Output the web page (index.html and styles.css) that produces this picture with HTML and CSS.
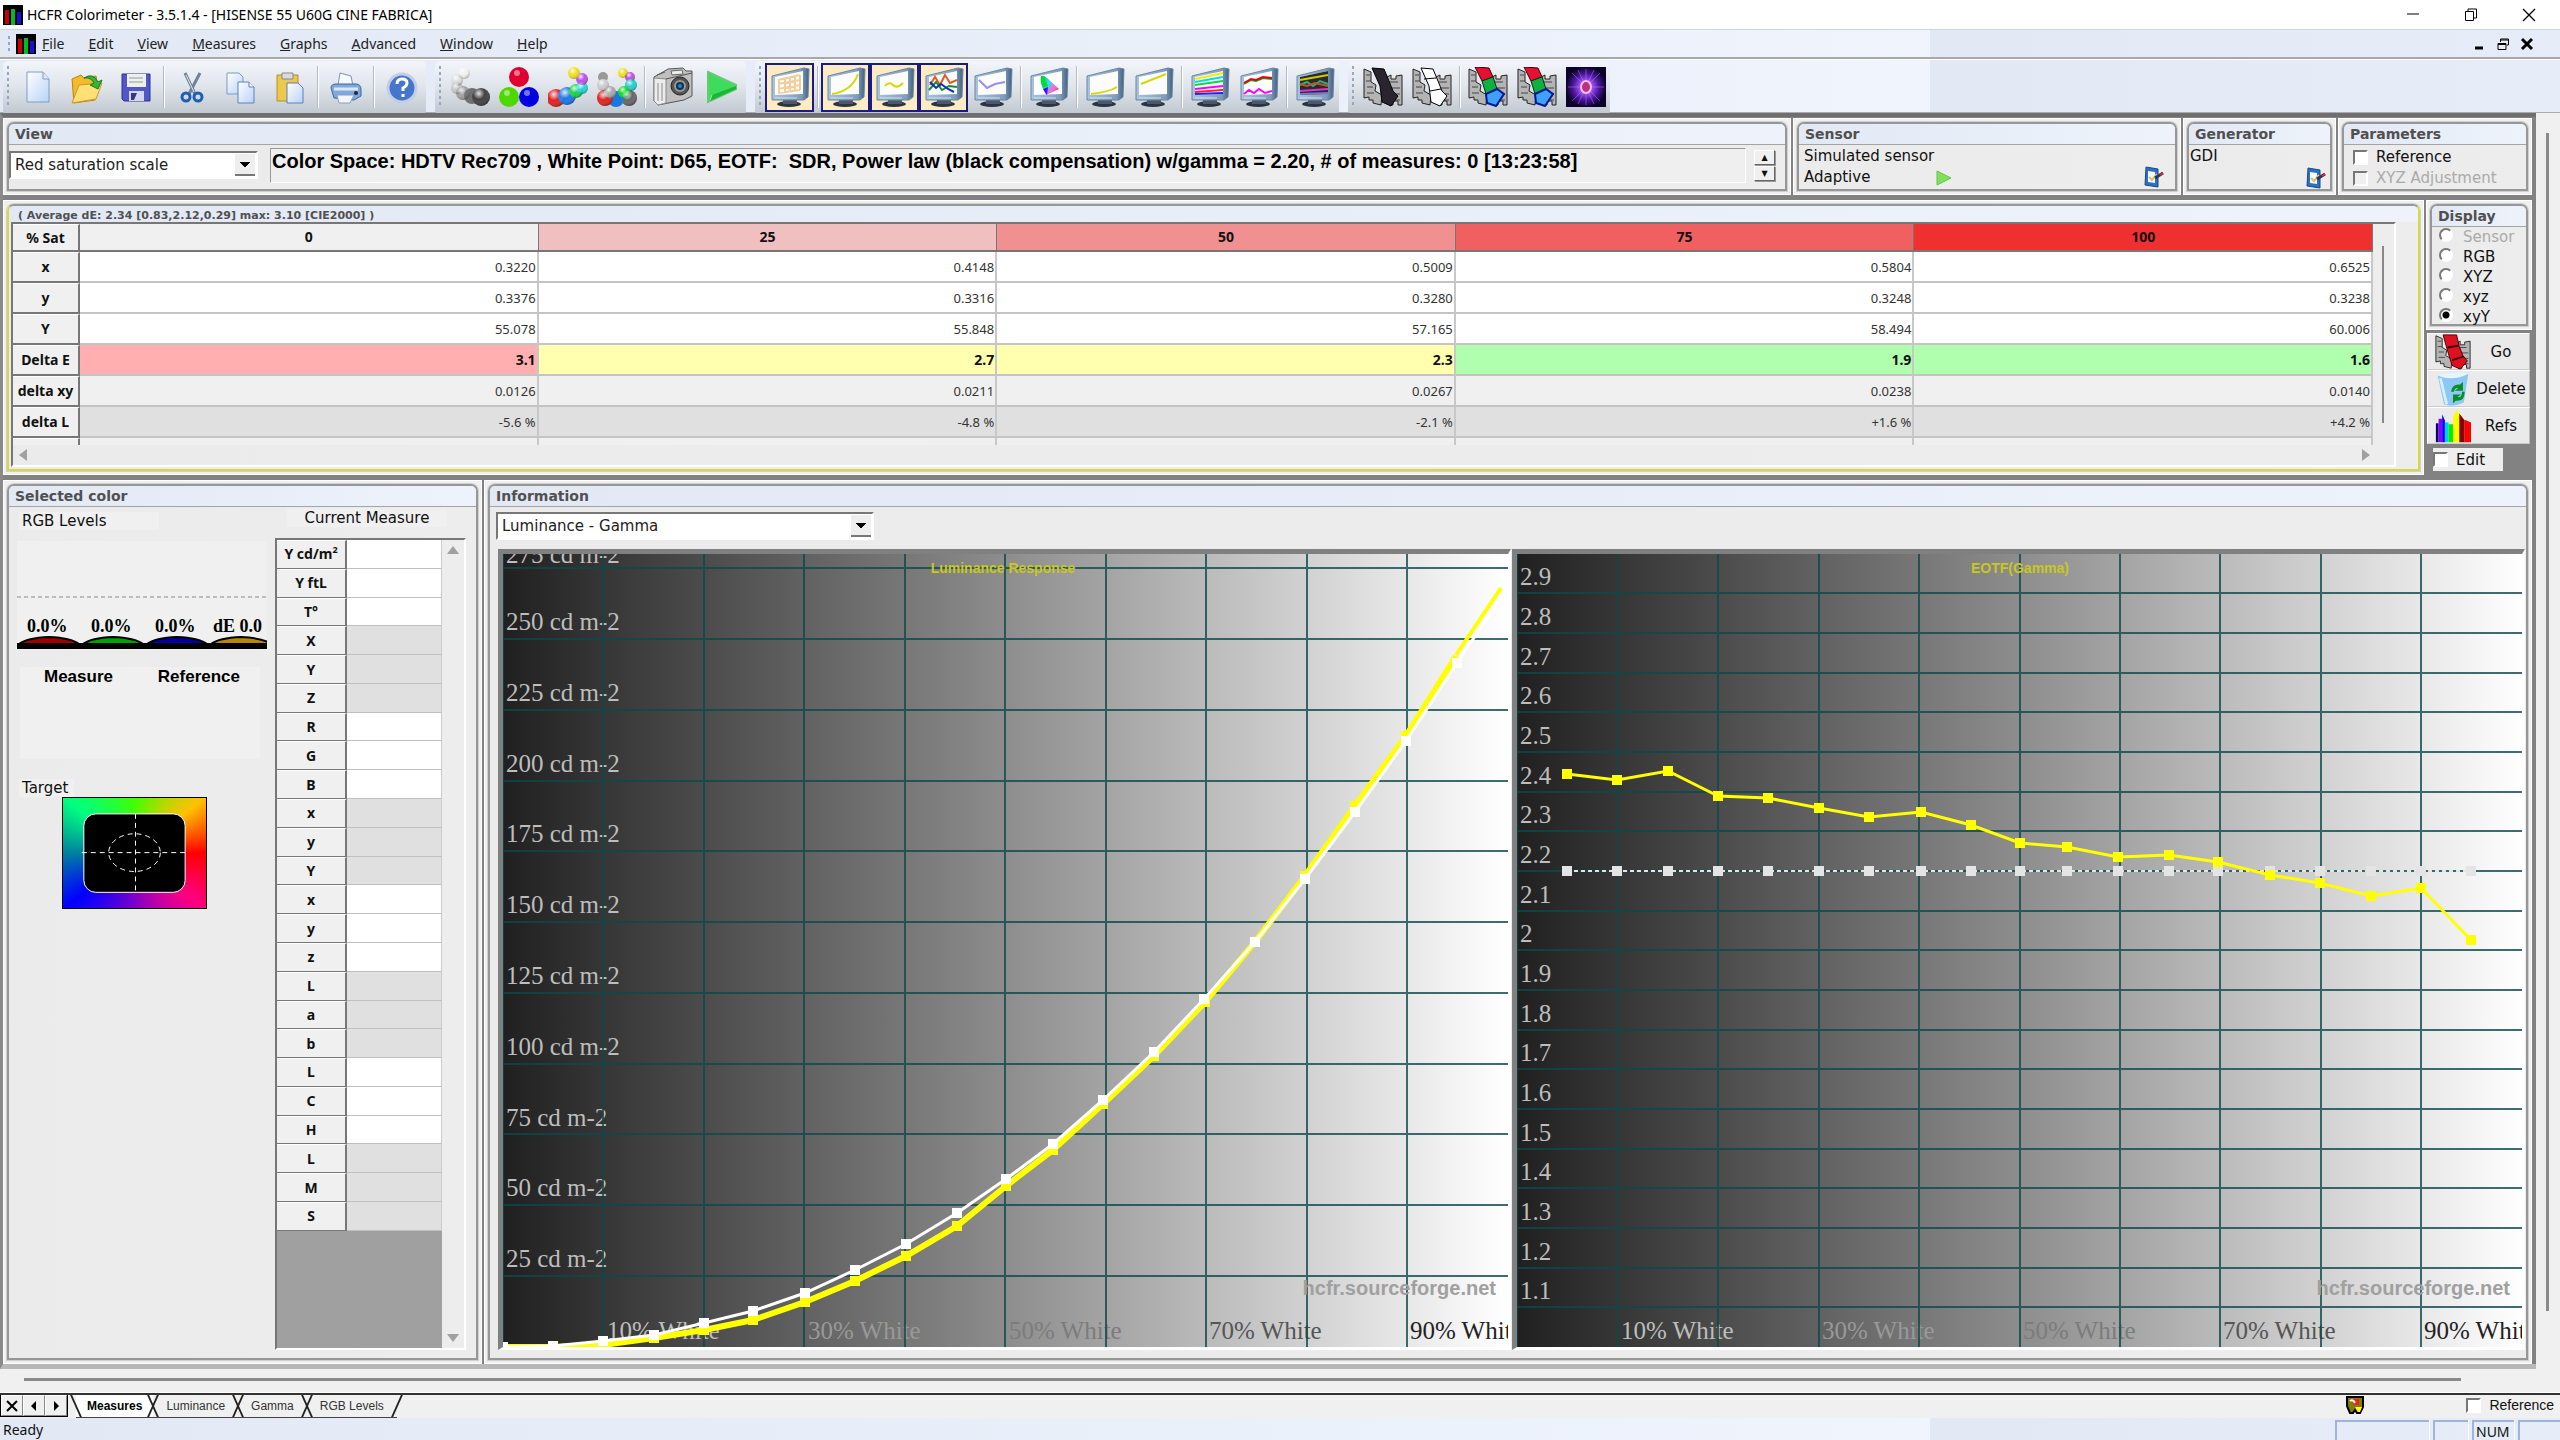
FILE: index.html
```html
<!DOCTYPE html>
<html lang="en">
<head>
<meta charset="utf-8">
<title>HCFR Colorimeter</title>
<link rel="stylesheet" href="styles.css">
</head>
<body>
<svg class="defs" width="0" height="0" aria-hidden="true">
  <defs>
    <linearGradient id="bezel" x1="0" x2="1"><stop offset="0" stop-color="#a9c4de"/><stop offset=".8" stop-color="#7f9cba"/><stop offset="1" stop-color="#3f5f80"/></linearGradient>
    <linearGradient id="sheet" x1="0" y1="0" x2="1" y2="1"><stop offset="0" stop-color="#fff"/><stop offset="1" stop-color="#b9d2f6"/></linearGradient>
    <linearGradient id="gamut" x1="0" y1="0" x2="1" y2="1"><stop offset="0" stop-color="#0c3"/><stop offset=".4" stop-color="#3df"/><stop offset=".7" stop-color="#f6c"/><stop offset="1" stop-color="#f00"/></linearGradient>
    <linearGradient id="ramp"><stop offset="0" stop-color="#202020"/><stop offset=".5" stop-color="#8d8d8d"/><stop offset="1" stop-color="#fff"/></linearGradient>
    <radialGradient id="shine" cx=".38" cy=".3" r=".75"><stop offset="0" stop-color="#fff" stop-opacity=".85"/><stop offset=".45" stop-color="#fff" stop-opacity="0"/><stop offset="1" stop-color="#000" stop-opacity=".35"/></radialGradient>
    <radialGradient id="nova"><stop offset="0" stop-color="#c03080"/><stop offset=".14" stop-color="#e8c0f8"/><stop offset=".3" stop-color="#a850f0"/><stop offset=".65" stop-color="#4a18a0"/><stop offset="1" stop-color="#0c0428"/></radialGradient>
    <symbol id="monitor" viewBox="0 0 40 40">
      <ellipse cx="19" cy="37" rx="12" ry="3" fill="#2b3440"/>
      <path d="M13 32h14v5H13z" fill="#4a5868"/>
      <path d="M2 9 34 1 39 2 38 30 34 33 2 33Z" fill="url(#bezel)" stroke="#6a86a4"/>
      <path d="M5 10 33 4V27L5 28Z" fill="#fcfcfc"/>
      <path d="M5 31h22" stroke="#cfe0f0"/>
    </symbol>
    <symbol id="film" viewBox="0 0 40 40">
      <path d="M1 2 8 5V15L13 18 12 24 19 28 18 38 10 36V33H6V30L1 31Z" fill="#b4b4b4" stroke="#222"/>
      <path d="M24 10 28 8V12H33V9L39 8V38H35V34H30V38H26V31L22 27V19Z" fill="#b4b4b4" stroke="#222"/>
      <path d="M3 8h4M3 14h5M4 20h6M4 26h7M27 15h8M29 21h8M30 27h7M32 33h5" stroke="#444"/>
    </symbol>
    <symbol id="config" viewBox="0 0 22 22">
      <path d="M4 1 16 3V21L3 19Z" fill="#2c6fc4" stroke="#174a8c"/><path d="M6 5 13 6V17L6 16Z" fill="#f4f8ff"/>
      <path d="M7 11 10 14 15 8" fill="none" stroke="#d8c070" stroke-width="2"/><path d="M13 12 21 7" stroke="#335" stroke-width="3"/><path d="M18 9 21 7" stroke="#c33" stroke-width="2"/>
    </symbol>
    <marker id="dotYellow" markerUnits="userSpaceOnUse" markerWidth="12" markerHeight="12" refX="6" refY="6"><path d="M1 1h10v10H1z" fill="#ff0"/></marker>
    <marker id="dotWhite" markerUnits="userSpaceOnUse" markerWidth="12" markerHeight="12" refX="6" refY="6"><path d="M1 1h10v10H1z" fill="#fff"/></marker>
    <marker id="dotGray" markerUnits="userSpaceOnUse" markerWidth="12" markerHeight="12" refX="6" refY="6"><path d="M1 1h10v10H1z" fill="#e4e4e4"/></marker>
  </defs>
</svg>

<header class="titlebar">
  <svg class="logo" viewBox="0 0 20 20"><path d="M0 0h20v20H0z"/><path d="M2 5h4v14H2z" fill="#c00"/><path d="M8 4h4v16H8z" fill="#0b2"/><path d="M14 7h4v12h-4z" fill="#11d"/></svg>
  <span class="title">HCFR Colorimeter - 3.5.1.4 - [HISENSE 55 U60G CINE FABRICA]</span>
  <div class="winbtns">
    <button aria-label="Minimize"><svg width="14" height="14"><path d="M1 6h12" stroke="#000"/></svg></button>
    <button aria-label="Restore"><svg width="14" height="14" fill="none" stroke="#000"><path d="M1.500 3.500h8v9h-8zM4 3V1h8.500v9H10"/></svg></button>
    <button aria-label="Close"><svg width="14" height="14"><path d="M1 1 13 13M13 1 1 13" stroke="#000" stroke-width="1.300"/></svg></button>
  </div>
</header>

<nav class="menubar">
  <span class="grip"></span>
  <svg class="logo" viewBox="0 0 20 20"><path d="M0 0h20v20H0z"/><path d="M2 5h4v14H2z" fill="#c00"/><path d="M8 4h4v16H8z" fill="#0b2"/><path d="M14 7h4v12h-4z" fill="#11d"/></svg>
  <div class="menus">
    <a href="#"><u>F</u>ile</a><a href="#"><u>E</u>dit</a><a href="#"><u>V</u>iew</a><a href="#"><u>M</u>easures</a><a href="#"><u>G</u>raphs</a><a href="#"><u>A</u>dvanced</a><a href="#"><u>W</u>indow</a><a href="#"><u>H</u>elp</a>
  </div>
  <div class="mdibtns">
    <button aria-label="Minimize document"><svg width="14" height="14"><path d="M3 11h8" stroke="#000" stroke-width="3"/></svg></button>
    <button aria-label="Restore document"><svg width="14" height="14" fill="none" stroke="#000"><path d="M2 6.500h8v6H2zM2 7.500h8M4.500 5V2h8v6H11M4.500 3h8"/></svg></button>
    <button aria-label="Close document"><svg width="14" height="14"><path d="M2 2 12 12M12 2 2 12" stroke="#000" stroke-width="3"/></svg></button>
  </div>
</nav>

<div class="toolbars">
  <div class="bar">
    <span class="grip"></span>
    <button aria-label="New"><svg viewBox="0 0 40 40"><path d="M9 5H25L31 12V35H9Z" fill="url(#sheet)" stroke="#7f9cc8"/><path d="M25 5V12H31" fill="#dce8fa" stroke="#7f9cc8"/></svg></button>
    <button aria-label="Open"><svg viewBox="0 0 40 40"><path d="M5 12 14 8 17 11 29 9 30 15 28 33 7 36Z" fill="#f2bb2c" stroke="#b98310"/><path d="M5 36 12 18 35 16 29 32Z" fill="#ffe078" stroke="#cf9a1c"/><path d="M17 11Q26 5 31 15L35 13 31 22 23 18 27 16Q24 10 17 11Z" fill="#35b53a" stroke="#1b7a22"/></svg></button>
    <button aria-label="Save"><svg viewBox="0 0 40 40"><path d="M6 7H34V34H8L6 32Z" fill="#5156c8" stroke="#30358c"/><path d="M11 7H30V20H11Z" fill="#eef0ee"/><path d="M13 11h14M13 15h14" stroke="#8fa08f"/><path d="M13 24H28V34H13Z" fill="#d4d7ea"/><path d="M15 26h6l-3 7h-3z" fill="#34387c"/></svg></button>
    <span class="sep"></span>
    <button aria-label="Cut"><svg viewBox="0 0 40 40"><path d="M13 6 23 27M28 6 17 27" stroke="#6f8299" stroke-width="3"/><path d="M14 8 22 25" stroke="#dfe8f0"/><circle cx="14" cy="30" r="4" fill="none" stroke="#1d5fb4" stroke-width="3"/><circle cx="26" cy="30" r="4" fill="none" stroke="#1d5fb4" stroke-width="3"/></svg></button>
    <button aria-label="Copy"><svg viewBox="0 0 40 40"><path d="M6 6H18L22 10V27H6Z" fill="url(#sheet)" stroke="#7b98cc"/><path d="M17 15H28L33 20V36H17Z" fill="url(#sheet)" stroke="#5f80c0"/><path d="M28 15V20H33" fill="#fff" stroke="#5f80c0"/></svg></button>
    <button aria-label="Paste"><svg viewBox="0 0 40 40"><path d="M7 8H28V34H7Z" fill="#ecc84c" stroke="#b3902a"/><path d="M12 6H23V12H12Z" fill="#d8dce2" stroke="#888"/><path d="M17 16H28L33 21V36H17Z" fill="url(#sheet)" stroke="#5f80c0"/></svg></button>
    <span class="sep"></span>
    <button aria-label="Print"><svg viewBox="0 0 40 40"><path d="M12 18 14 6 25 9 27 19Z" fill="#f6faff" stroke="#7f94b4"/><path d="M5 21Q5 17 10 17H30Q35 17 35 23V29L28 33 8 31Z" fill="#7fa8dc" stroke="#3d66a0"/><path d="M8 22H32" stroke="#dbe8f8" stroke-width="3"/><path d="M11 28H28L24 36H13Z" fill="#f2f6fc" stroke="#8aa0c0"/><circle cx="30" cy="26" r="2" fill="#224"/></svg></button>
    <span class="sep"></span>
    <button aria-label="Help"><svg viewBox="0 0 40 40"><circle cx="20" cy="21" r="14" fill="#4676cc" stroke="#c2cfe6" stroke-width="3"/><path d="M15 17Q15 12 20 12 25 12 25 16 25 19 21 21V24M21 27V30" fill="none" stroke="#fff" stroke-width="3"/></svg></button>
  </div>
  <div class="bar">
    <span class="grip"></span>
    <button aria-label="Grayscale"><svg viewBox="0 0 40 40"><circle cx="14" cy="6" r="6" fill="#f0f0f0"/><circle cx="7" cy="13" r="6" fill="#e0e0e0"/><circle cx="7" cy="21" r="6" fill="#c8c8c8"/><circle cx="13" cy="26" r="7" fill="#a0a0a0"/><circle cx="22" cy="29" r="8" fill="#707070"/><circle cx="31" cy="30" r="9" fill="#404040"/><g fill="url(#shine)"><circle cx="14" cy="6" r="6"/><circle cx="7" cy="13" r="6"/><circle cx="7" cy="21" r="6"/><circle cx="13" cy="26" r="7"/><circle cx="31" cy="30" r="9"/></g></svg></button>
    <button aria-label="Primaries"><svg viewBox="0 0 40 40"><circle cx="20" cy="10" r="10" fill="#e00030"/><circle cx="10" cy="30" r="10" fill="#4fd800"/><circle cx="30" cy="30" r="10" fill="#0000e0"/><g fill="#fff" fill-opacity=".45"><circle cx="18" cy="6" r="3"/><circle cx="8" cy="26" r="3"/><circle cx="28" cy="26" r="3"/></g></svg></button>
    <button aria-label="Secondaries"><svg viewBox="0 0 40 40"><circle cx="8" cy="31" r="9" fill="#e02020"/><circle cx="19" cy="29" r="9" fill="#1878f0"/><circle cx="28" cy="24" r="7" fill="#10d840"/><circle cx="34" cy="21" r="6" fill="#20d8d8"/><circle cx="34" cy="12" r="6" fill="#c050f0"/><circle cx="26" cy="6" r="6" fill="#f0e020"/><g fill="url(#shine)"><circle cx="8" cy="31" r="9"/><circle cx="19" cy="29" r="9"/><circle cx="28" cy="24" r="7"/><circle cx="34" cy="21" r="6"/><circle cx="34" cy="12" r="6"/><circle cx="26" cy="6" r="6"/></g></svg></button>
    <button aria-label="All colors"><svg viewBox="0 0 40 40"><circle cx="14" cy="6" r="5" fill="#eee"/><circle cx="26" cy="6" r="5" fill="#f0e020"/><circle cx="33" cy="10" r="5" fill="#c050e0"/><circle cx="34" cy="18" r="6" fill="#20d0d0"/><circle cx="6" cy="10" r="5" fill="#999"/><circle cx="6" cy="18" r="6" fill="#ccc"/><circle cx="32" cy="31" r="8" fill="#666"/><circle cx="19" cy="32" r="8" fill="#1878e0"/><circle cx="8" cy="31" r="8" fill="#e02020"/><circle cx="13" cy="25" r="6" fill="#aaa"/><circle cx="27" cy="25" r="6" fill="#10d828"/><g fill="url(#shine)"><circle cx="26" cy="6" r="5"/><circle cx="33" cy="10" r="5"/><circle cx="34" cy="18" r="6"/><circle cx="6" cy="18" r="6"/><circle cx="32" cy="31" r="8"/><circle cx="8" cy="31" r="8"/><circle cx="13" cy="25" r="6"/><circle cx="27" cy="25" r="6"/></g></svg></button>
    <span class="sep"></span>
    <button aria-label="Snapshot"><svg viewBox="0 0 40 40"><path d="M1 10 10 5 15 2 30 1 33 4 39 4V29L31 33 5 38 1 34Z" fill="#c0c0c0" stroke="#555"/><path d="M1 11 13 12V36L5 38 1 34Z" fill="#ececec" stroke="#888"/><path d="M13 12 39 6M4 8 12 5" stroke="#555"/><path d="M18 4 29 3 30 7 19 8Z" fill="#eee" stroke="#666"/><circle cx="27" cy="19" r="9" fill="#555" stroke="#222"/><circle cx="27" cy="19" r="6" fill="#999"/><circle cx="27" cy="19" r="4" fill="#134"/><circle cx="27" cy="19" r="2" fill="#28c"/><path d="M5 16v18M9 16v18" stroke="#bbb" stroke-width="2"/></svg></button>
    <button aria-label="Continuous measures"><svg viewBox="0 0 40 40"><path d="M6 5 34 18V22L6 35Z" fill="#3fdc5c" stroke="#68c878" stroke-width="2"/><path d="M8 34 34 22V19L10 28Z" fill="#18b834"/><path d="M8 33 10 28" stroke="#9cf0a8"/></svg></button>
  </div>
  <div class="bar">
    <span class="grip"></span>
    <button class="on" aria-label="Measures view"><svg viewBox="0 0 40 40"><use href="#monitor"/><path d="M8 13 30 8M8 17 30 13M8 22 30 18M8 26 30 23M9 13V26M15 12V26M20 11V25M25 9V24M30 8V23" fill="none" stroke="#f2cf98" stroke-width="2"/></svg></button>
    <span class="sep"></span>
    <button class="on" aria-label="Luminance"><svg viewBox="0 0 40 40"><use href="#monitor"/><path d="M6 27Q26 24 32 7" fill="none" stroke="#d8d800" stroke-width="2"/></svg></button>
    <button class="on" aria-label="Gamma"><svg viewBox="0 0 40 40"><use href="#monitor"/><path d="M10 19Q14 14 18 18 22 22 28 16" fill="none" stroke="#d8d800" stroke-width="2"/></svg></button>
    <button class="on" aria-label="RGB levels"><svg viewBox="0 0 40 40"><use href="#monitor"/><g fill="none" stroke-width="2"><path d="M6 18 11 10 16 18 21 8 26 16 33 13" stroke="#e85820"/><path d="M5 23 12 15 18 23 25 19 33 20" stroke="#10903c"/><path d="M6 15 12 21 17 17 24 22 30 25" stroke="#1030b0"/></g></svg></button>
    <button aria-label="Color temperature"><svg viewBox="0 0 40 40"><use href="#monitor"/><path d="M6 13 14 21 22 17 32 15" fill="none" stroke="#9a90e8" stroke-width="2"/></svg></button>
    <span class="sep"></span>
    <button aria-label="CIE diagram"><svg viewBox="0 0 40 40"><use href="#monitor"/><path d="M12 9Q15 8 18 11L30 22 17 28Q11 18 12 9Z" fill="url(#gamut)"/><path d="M12 10Q15 9 16 12L19 19 14 21Q11 15 12 10Z" fill="#0d3"/><path d="M14 22 19 20 18 28Z" fill="#31f"/></svg></button>
    <span class="sep"></span>
    <button aria-label="Near black"><svg viewBox="0 0 40 40"><use href="#monitor"/><path d="M6 27Q24 25 32 20" fill="none" stroke="#d8d800" stroke-width="2"/></svg></button>
    <button aria-label="Near white"><svg viewBox="0 0 40 40"><use href="#monitor"/><path d="M7 17 32 7" fill="none" stroke="#d8d800" stroke-width="2"/></svg></button>
    <span class="sep"></span>
    <button aria-label="Saturation luminance"><svg viewBox="0 0 40 40"><use href="#monitor"/><g stroke-width="2"><path d="M5 12 33 6" stroke="#ee0"/><path d="M5 15 33 10" stroke="#0dd"/><path d="M5 18 33 14" stroke="#0d4"/><path d="M5 22 33 19" stroke="#f0f"/><path d="M5 25 33 23" stroke="#f22"/><path d="M5 27 33 26" stroke="#22f"/></g></svg></button>
    <button aria-label="Saturation shift"><svg viewBox="0 0 40 40"><use href="#monitor"/><g fill="none" stroke-width="2"><path d="M5 17 12 13 17 14 24 11 33 12" stroke="#0a3"/><path d="M5 16 12 12 17 13 24 10 33 11" stroke="#e00"/><path d="M5 27 10 23 15 26 20 22 26 26 33 24" stroke="#f0f"/></g></svg></button>
    <span class="sep"></span>
    <button aria-label="Combined graph"><svg viewBox="0 0 40 40"><use href="#monitor"/><path d="M5 10 33 4V27L5 28Z" fill="#2a2a2a"/><g fill="none" stroke-width="2"><path d="M5 13 33 8" stroke="#cc0"/><path d="M5 18 12 15 18 19 25 14 33 17" stroke="#3a7"/><path d="M5 17 12 19 20 16 33 19" stroke="#b53"/><path d="M5 24 33 22" stroke="#d3d"/><path d="M5 27 33 26" stroke="#77c"/></g></svg></button>
  </div>
  <div class="bar">
    <span class="grip"></span>
    <button aria-label="Black scale"><svg viewBox="0 0 40 40"><use href="#film"/><path d="M9 1 21 2 26 14 30 24 35 29 28 39 19 35 17 19Z" fill="#2a2430" stroke="#000"/></svg></button>
    <button aria-label="White scale"><svg viewBox="0 0 40 40"><use href="#film"/><path d="M9 1 21 2 26 14 30 24 35 29 28 39 19 35 17 19Z" fill="#fff" stroke="#000"/><path d="M12 12 24 11M18 24 29 22" stroke="#000"/></svg></button>
    <span class="sep"></span>
    <button aria-label="RGB scale"><svg viewBox="0 0 40 40"><use href="#film"/><path d="M7 0 21 1 25 10 14 14Z" fill="#e81030" stroke="#300"/><path d="M14 14 25 10 29 22 18 27Z" fill="#10b040" stroke="#031"/><path d="M18 27 29 22 36 27 28 39 19 36Z" fill="#40a0ff" stroke="#001a90" stroke-width="2"/></svg></button>
    <button aria-label="RGB and CMY scale"><svg viewBox="0 0 40 40"><use href="#film"/><path d="M7 0 21 1 25 10 14 14Z" fill="#e81030" stroke="#300"/><path d="M14 14 25 10 29 22 18 27Z" fill="#10b040" stroke="#031"/><path d="M18 27 29 22 36 27 28 39 19 36Z" fill="#40a0ff" stroke="#001a90" stroke-width="2"/></svg></button>
    <button aria-label="Calibration"><svg viewBox="0 0 40 40"><path d="M0 0h40v40H0z" fill="url(#nova)"/><g stroke="#b478ff" stroke-opacity=".5"><path d="M20 2V38M2 20H38M6 6 34 34M34 6 6 34M12 3 28 37M28 3 12 37"/></g><ellipse cx="20" cy="20" rx="5" ry="6" fill="#c03080" stroke="#e6c0fa" stroke-width="2"/></svg></button>
  </div>
</div>

<main class="desk">
  <div class="workspace">
    <div class="row top">
      <section class="panel"><div class="frame">
        <h2>View</h2>
        <div class="viewbody">
          <select class="combo" aria-label="View"><option>Red saturation scale</option></select>
          <input class="infoline" aria-label="Measure information" readonly value="Color Space: HDTV Rec709 , White Point: D65, EOTF:  SDR, Power law (black compensation) w/gamma = 2.20, # of measures: 0 [13:23:58]">
          <div class="spin"><button aria-label="Up">▲</button><button aria-label="Down">▼</button></div>
        </div>
      </div></section>
      <section class="panel"><div class="frame">
        <h2>Sensor</h2>
        <div class="devbody">
          <div class="devtext"><span>Simulated sensor</span><span class="mode">Adaptive<svg width="16" height="16"><path d="M1 1 15 8 1 15Z" fill="#7fe05c" stroke="#60c840"/></svg></span></div>
          <button class="cfg" aria-label="Configure sensor"><svg><use href="#config"/></svg></button>
        </div>
      </div></section>
      <section class="panel"><div class="frame">
        <h2>Generator</h2>
        <div class="devbody tight">
          <div class="devtext"><span>GDI</span></div>
          <button class="cfg" aria-label="Configure generator"><svg><use href="#config"/></svg></button>
        </div>
      </div></section>
      <section class="panel"><div class="frame">
        <h2>Parameters</h2>
        <div class="params">
          <label><input type="checkbox">Reference</label>
          <label class="off"><input type="checkbox" disabled>XYZ Adjustment</label>
        </div>
      </div></section>
    </div>

    <div class="row mid">
      <section class="panel measure"><div class="frame">
        <h2>( Average dE: 2.34 [0.83,2.12,0.29] max: 3.10 [CIE2000] )</h2>
        <div class="gridbox">
          <div class="gridrow">
            <table class="data">
              <thead><tr><th>% Sat</th><th>0</th><th class="s25">25</th><th class="s50">50</th><th class="s75">75</th><th class="s100">100</th></tr></thead>
              <tbody>
                <tr><th>x</th><td>0.3220</td><td>0.4148</td><td>0.5009</td><td>0.5804</td><td>0.6525</td></tr>
                <tr><th>y</th><td>0.3376</td><td>0.3316</td><td>0.3280</td><td>0.3248</td><td>0.3238</td></tr>
                <tr><th>Y</th><td>55.078</td><td>55.848</td><td>57.165</td><td>58.494</td><td>60.006</td></tr>
                <tr class="delta"><th>Delta E</th><td class="bad">3.1</td><td class="fair">2.7</td><td class="fair">2.3</td><td class="good">1.9</td><td class="good">1.6</td></tr>
                <tr class="light"><th>delta xy</th><td>0.0126</td><td>0.0211</td><td>0.0267</td><td>0.0238</td><td>0.0140</td></tr>
                <tr class="dark"><th>delta L</th><td>-5.6 %</td><td>-4.8 %</td><td>-2.1 %</td><td>+1.6 %</td><td>+4.2 %</td></tr>
                <tr class="light cut"><th></th><td></td><td></td><td></td><td></td><td></td></tr>
              </tbody>
            </table>
            <div class="vthumb"></div>
          </div>
          <div class="hbar"><span class="tri left"></span><span class="tri right"></span></div>
        </div>
      </div></section>
      <aside class="side">
        <section class="panel"><div class="frame">
          <h2>Display</h2>
          <div class="radios">
            <label class="off"><input type="radio" name="disp" disabled>Sensor</label>
            <label><input type="radio" name="disp">RGB</label>
            <label><input type="radio" name="disp">XYZ</label>
            <label><input type="radio" name="disp">xyz</label>
            <label><input type="radio" name="disp" checked>xyY</label>
          </div>
        </div></section>
        <div class="actions">
          <button><svg viewBox="0 0 40 40"><use href="#film"/><path d="M9 1 24 1 27 14 31 24 36 30 28 39 19 35 14 19Z" fill="#e01020" stroke="#300"/><path d="M14 15 26 13M19 29 32 25" stroke="#300" stroke-width="2"/></svg><span>Go</span></button>
          <button><svg viewBox="0 0 40 40"><path d="M3 5Q18 11 37 3L32 35Q20 41 10 37Z" fill="#8cc8f4"/><path d="M3 5Q20 0 37 3 20 12 3 5Z" fill="#e6f5ff"/><path d="M6 8 13 37" stroke="#d6f0ff" stroke-width="3"/><path d="M18 23Q19 14 28 15L31 12V22H22L26 19Q22 18 21 23ZM33 23Q33 34 23 33L20 36V26H29L25 29Q30 30 30 23Z" fill="#0c8c24"/></svg><span>Delete</span></button>
          <button><svg viewBox="0 0 40 40"><path d="M1 17H4V38H1Z" fill="#006"/><path d="M4 12H8V38H4Z" fill="#80f"/><path d="M8 7 11 14V38H8Z" fill="#00f"/><path d="M11 16H15V38H11Z" fill="#0cf"/><path d="M15 18H20V38H15Z" fill="#0e0"/><path d="M20 10 24 2 28 8V38H20Z" fill="#ff0"/><path d="M27 6 33 14V38H27Z" fill="#800"/><path d="M33 13 40 16V38H33Z" fill="#f00"/></svg><span>Refs</span></button>
        </div>
        <label class="edit"><input type="checkbox">Edit</label>
      </aside>
    </div>

    <div class="row low">
      <section class="panel selected"><div class="frame">
        <h2>Selected color</h2>
        <div class="selbody">
          <div class="levels">
            <p class="tag">RGB Levels</p>
            <svg class="domes" viewBox="0 0 250 109">
              <path d="M0 56H250" stroke="#888" stroke-dasharray="4 3"/>
              <g font-family="Liberation Serif, serif" font-weight="bold" font-size="18"><text x="10" y="91">0.0%</text><text x="74" y="91">0.0%</text><text x="138" y="91">0.0%</text><text x="196" y="91">dE 0.0</text></g>
              <g stroke="#000" stroke-width="2"><path d="M2 103Q10 97 32 96 54 97 62 103Z" fill="#a00000"/><path d="M66 103Q74 97 96 96 118 97 126 103Z" fill="#00a000"/><path d="M130 103Q138 97 160 96 182 97 190 103Z" fill="#0000a0"/><path d="M194 103Q202 97 224 96 246 97 254 103Z" fill="#b8860b"/></g>
              <path d="M0 102H250V108H0Z"/>
            </svg>
            <div class="compare"><span>Measure</span><span>Reference</span></div>
            <p class="tag target">Target</p>
            <div class="wheel"><svg viewBox="0 0 144 111"><rect x="21" y="16" width="102" height="79" rx="12" stroke="#fff"/><g fill="none" stroke="#fff" stroke-dasharray="5 4"><path d="M19 55H126M73 16V95"/><ellipse cx="72" cy="55" rx="26" ry="19"/></g></svg></div>
          </div>
          <div class="current">
            <p class="tag">Current Measure</p>
            <div class="listbox">
              <div class="listarea">
              <table class="values">
                <tr><th>Y cd/m<sup>2</sup></th><td></td></tr><tr><th>Y ftL</th><td></td></tr><tr><th>T°</th><td></td></tr>
                <tr class="g"><th>X</th><td></td></tr><tr class="g"><th>Y</th><td></td></tr><tr class="g"><th>Z</th><td></td></tr>
                <tr><th>R</th><td></td></tr><tr><th>G</th><td></td></tr><tr><th>B</th><td></td></tr>
                <tr class="g"><th>x</th><td></td></tr><tr class="g"><th>y</th><td></td></tr><tr class="g"><th>Y</th><td></td></tr>
                <tr><th>x</th><td></td></tr><tr><th>y</th><td></td></tr><tr><th>z</th><td></td></tr>
                <tr class="g"><th>L</th><td></td></tr><tr class="g"><th>a</th><td></td></tr><tr class="g"><th>b</th><td></td></tr>
                <tr><th>L</th><td></td></tr><tr><th>C</th><td></td></tr><tr><th>H</th><td></td></tr>
                <tr class="g"><th>L</th><td></td></tr><tr class="g"><th>M</th><td></td></tr><tr class="g"><th>S</th><td></td></tr>
              </table>
              </div>
              <div class="vbar"><span class="tri up"></span><span class="tri down"></span></div>
            </div>
          </div>
        </div>
      </div></section>

      <section class="panel info"><div class="frame">
        <h2>Information</h2>
        <div class="infobody">
          <select class="combo wide" aria-label="Information"><option>Luminance - Gamma</option></select>
          <div class="charts">
            <div class="chart"><svg viewBox="0 0 1005 793">
              <rect width="1005" height="793" fill="url(#ramp)"/>
              <g class="axis">
                <text x="3" y="9">275 cd m-2</text><text x="3" y="76">250 cd m-2</text><text x="3" y="147">225 cd m-2</text><text x="3" y="218">200 cd m-2</text><text x="3" y="288">175 cd m-2</text><text x="3" y="359">150 cd m-2</text><text x="3" y="430">125 cd m-2</text><text x="3" y="501">100 cd m-2</text><text x="3" y="572">75 cd m-2</text><text x="3" y="642">50 cd m-2</text><text x="3" y="713">25 cd m-2</text>
                <text x="104" y="785">10% White</text><text x="305" y="785" fill="#999">30% White</text><text x="506" y="785" fill="#7c7c7c">50% White</text><text x="706" y="785" fill="#555">70% White</text><text x="907" y="785" fill="#222">90% White</text>
              </g>
              <path class="grid" d="M0 0V793M100 0V793M201 0V793M301 0V793M402 0V793M502 0V793M603 0V793M703 0V793M804 0V793M904 0V793M0 14H1005M0 85H1005M0 156H1005M0 227H1005M0 297H1005M0 368H1005M0 439H1005M0 510H1005M0 580H1005M0 651H1005M0 722H1005"/>
              <text class="ctitle" x="500" y="19">Luminance Response</text>
              <polyline class="ln thick" marker-mid="url(#dotYellow)" points="0,793 50,793 100,791 151,784 201,776 250,766 302,748 352,727 403,702 454,672 503,632 550,596 600,550 651,502 702,448 752,388 802,322 852,252 903,182 953,102"/>
              <polyline class="ln white" marker-start="url(#dotWhite)" marker-mid="url(#dotWhite)" points="0,793 50,792 100,787 151,781 201,769 250,757 302,739 352,716 403,690 454,659 503,625 550,590 600,546 651,498 701,445 752,388 802,325 852,258 903,187 954,109 1005,33"/>
              <path d="M953 101 998 34" stroke="#ff0" stroke-width="4"/>
              <text class="brand" x="993" y="741">hcfr.sourceforge.net</text>
            </svg></div>
            <div class="chart"><svg viewBox="0 0 1005 793">
              <rect width="1005" height="793" fill="url(#ramp)"/>
              <g class="axis">
                <text x="3" y="31">2.9</text><text x="3" y="71">2.8</text><text x="3" y="111">2.7</text><text x="3" y="150">2.6</text><text x="3" y="190">2.5</text><text x="3" y="230">2.4</text><text x="3" y="269">2.3</text><text x="3" y="309">2.2</text><text x="3" y="349">2.1</text><text x="3" y="388">2</text><text x="3" y="428">1.9</text><text x="3" y="468">1.8</text><text x="3" y="507">1.7</text><text x="3" y="547">1.6</text><text x="3" y="587">1.5</text><text x="3" y="626">1.4</text><text x="3" y="666">1.3</text><text x="3" y="706">1.2</text><text x="3" y="745">1.1</text>
                <text x="104" y="785">10% White</text><text x="305" y="785" fill="#999">30% White</text><text x="506" y="785" fill="#7c7c7c">50% White</text><text x="706" y="785" fill="#555">70% White</text><text x="907" y="785" fill="#222">90% White</text>
              </g>
              <path class="grid" d="M0 0V793M101 0V793M201 0V793M302 0V793M402 0V793M503 0V793M603 0V793M703 0V793M804 0V793M904 0V793M0 39H1005M0 79H1005M0 119H1005M0 158H1005M0 198H1005M0 238H1005M0 277H1005M0 317H1005M0 357H1005M0 396H1005M0 436H1005M0 476H1005M0 515H1005M0 555H1005M0 595H1005M0 634H1005M0 674H1005M0 714H1005M0 753H1005"/>
              <text class="ctitle" x="503" y="19">EOTF(Gamma)</text>
              <polyline class="ln ref" marker-start="url(#dotGray)" marker-mid="url(#dotGray)" marker-end="url(#dotGray)" points="50,317 100,317 151,317 201,317 251,317 302,317 352,317 404,317 454,317 503,317 550,317 601,317 652,317 701,317 753,317 803,317 854,317 904,317 954,317"/>
              <polyline class="ln" marker-start="url(#dotYellow)" marker-mid="url(#dotYellow)" marker-end="url(#dotYellow)" points="50,220 100,226 151,217 201,242 251,244 302,254 352,263 404,258 454,271 503,289 550,293 601,303 652,301 701,308 753,321 803,329 854,342 904,334 954,386"/>
              <text class="brand" x="993" y="741">hcfr.sourceforge.net</text>
            </svg></div>
          </div>
        </div>
      </div></section>
    </div>
  </div>
  <div class="deskv"></div>
  <div class="deskh"></div>
</main>

<div class="tabstrip">
  <div class="nav"><button aria-label="Close tab"><svg width="12" height="14"><path d="M1 2 11 12M11 2 1 12" stroke="#000" stroke-width="2"/></svg></button><button aria-label="Previous"><svg width="12" height="14"><path d="M8 2 3 7 8 12Z"/></svg></button><button aria-label="Next"><svg width="12" height="14"><path d="M4 2 9 7 4 12Z"/></svg></button></div>
  <button class="tab active">Measures</button><button class="tab">Luminance</button><button class="tab">Gamma</button><button class="tab">RGB Levels</button>
  <svg class="mini" viewBox="0 0 18 18"><path d="M1 1H17V11L14 17H11L9 14 7 17H4L1 10Z" fill="#808000" stroke="#000" stroke-width="2"/><path d="M4 3H13V9H8Z" fill="#f02020"/><path d="M4 5Q7 3 9 7" stroke="#fff" fill="none" stroke-width="2"/><path d="M9 11H16L14 16H12Z" fill="#ff0"/></svg>
  <label class="tabref"><input type="checkbox">Reference</label>
</div>

<footer class="status"><span class="ready">Ready</span><span class="cell a"></span><span class="cell b"></span><span class="cell">NUM</span><span class="cell"></span></footer>
</body>
</html>
```
FILE: styles.css
```css
* { box-sizing: border-box; }
body {
  margin: 0;
  min-height: 100vh;
  display: flex;
  flex-direction: column;
  background: #f0f0f0;
  color: #111;
  font: 15px/20px "DejaVu Sans", sans-serif;
}
button, select, input { font: inherit; color: inherit; margin: 0; }
button { border: 0; padding: 0; background: none; display: flex; align-items: center; justify-content: center; }
h2, p { margin: 0; }
svg { display: block; flex: none; }
.defs { position: absolute; }
.logo { width: 20px; height: 20px; }

/* Title and menu */
.titlebar { height: 29px; background: #fff; display: flex; align-items: center; padding-left: 3px; gap: 4px; font: 14px/20px "Noto Sans", sans-serif; color: #000; }
.winbtns { margin-left: auto; display: flex; padding-right: 2px; }
.winbtns button { width: 58px; height: 28px; }
.menubar, .toolbars, .status { background: linear-gradient(90deg, #e2e9f5, #eff4fd) 0 0 / 1930px 100%; }
.menubar { height: 30px; border-top: 1px solid #ccd8e0; border-bottom: 2px solid #a8a8a8; display: flex; align-items: center; font: 14px/20px "Noto Sans", sans-serif; padding-left: 4px; }
.menubar .logo { margin-left: 2px; }
.menus { display: flex; gap: 24px; margin-left: 6px; }
.menus a { color: #222; text-decoration: none; }
.mdibtns { margin-left: auto; display: flex; gap: 10px; padding-right: 26px; }
.grip { width: 10px; height: 42px; flex: none; background: repeating-linear-gradient(#8fa9c8 0 3px, transparent 3px 6px) 4px 0 / 2px 100% no-repeat; }
.menubar .grip { height: 16px; }

/* Toolbars */
.toolbars { height: 54px; border-top: 1px solid #fff; border-bottom: 1px solid #aaa; display: flex; gap: 9px; padding: 1px 0 0 3px; }
.bar { display: flex; align-items: center; height: 52px; border-radius: 5px 5px 2px 2px; background: linear-gradient(#f2f5fa, #e2e7ed 45%, #c3c9d1); }
.bar button { width: 49px; height: 49px; }
.bar button svg { width: 40px; height: 40px; }
.bar button.on { background: #fdebc4; border: 2px solid #1c1c80; }
.sep { width: 7px; height: 42px; flex: none; background: linear-gradient(90deg, transparent 3px, #b4bac4 3px 4px, #fff 4px 5px, transparent 5px); }

/* Desktop with panels */
.desk { flex: 1; display: grid; grid-template-columns: minmax(0, 1fr) 24px; grid-template-rows: 1fr 24px; background: #f0f0f0; }
.workspace { background: #828282; border-top: 4px solid #6f6f6f; border-left: 3px solid #8a8a8a; border-bottom: 5px solid #b8b8b8; padding: 1px 4px 0 0; display: flex; flex-direction: column; gap: 5px; }
.row { display: grid; gap: 2px; }
.top { grid-template-columns: minmax(0, 1fr) 388px 153px 194px; height: 77px; }
.mid { grid-template-columns: minmax(0, 1fr) 106px; }
.low { grid-template-columns: 479px minmax(0, 1fr); flex: 1; }
.panel { background: #f0f0f0; border: 1px solid #fff; padding: 3px; display: flex; min-width: 0; }
.frame { flex: 1; min-width: 0; border: 2px solid #979797; border-radius: 7px 7px 0 0; background: linear-gradient(90deg, #ebebeb, #ededed); display: flex; flex-direction: column; box-shadow: 0 0 0 1px #d0d0d0; }
.frame > h2 { height: 21px; border-radius: 5px 5px 0 0; border-bottom: 1px solid #a4a4a4; background: linear-gradient(90deg, #e2e9f5, #eef3fb); color: #505050; font: bold 14px/20px "DejaVu Sans", sans-serif; padding-left: 6px; white-space: nowrap; }
.deskv { padding: 20px 0 58px 10px; }
.deskv::before { content: ""; display: block; width: 3px; height: 100%; background: #8a8a8a; }
.deskh { grid-column: 1 / 3; padding: 9px 99px 0 24px; border-bottom: 1px solid #fff; }
.deskh::before { content: ""; display: block; height: 3px; background: #8a8a8a; }

/* Controls */
.combo { appearance: none; height: 28px; width: 249px; border: 2px solid; border-color: #777 #fff #fff #777; border-radius: 0; padding: 0 24px 0 4px; outline: 0; color: #222; background-color: #fff;
  background-image: linear-gradient(to bottom right, #000 50%, transparent 50%), linear-gradient(to bottom left, #000 50%, transparent 50%), linear-gradient(0deg, #777 2px, #eee 2px);
  background-size: 5px 6px, 5px 6px, 20px 22px; background-position: right 6px center, right 11px center, right 1px center; background-repeat: no-repeat; }
.combo.wide { width: 378px; }
input[type="checkbox"] { appearance: none; width: 15px; height: 15px; border: 2px solid; border-color: #777 #fff #fff #777; background: #fff; flex: none; }
input[type="checkbox"]:disabled { background: #f0f0f0; }
input[type="radio"] { appearance: none; width: 14px; height: 14px; border-radius: 50%; border: 2px solid; border-color: #777 #fff #fff #777; background: #fff; flex: none; }
input[type="radio"]:checked { background: radial-gradient(#000 3px, #fff 4px); }
label { display: flex; align-items: center; gap: 8px; }
.off { color: #aaa; }

/* Top row */
.viewbody { display: flex; padding: 3px 10px 0 0; gap: 12px; }
.viewbody .combo { margin-top: 3px; }
.infoline { flex: 1; min-width: 0; height: 35px; border: 1px solid; border-color: #999 #fff #fff #999; background: #efefef; font: bold 20px/24px "Liberation Sans", sans-serif; color: #000; padding: 0 0 9px 1px; outline: 0; }
.spin { display: flex; flex-direction: column; gap: 1px; padding-top: 2px; margin-left: -4px; }
.spin button { width: 21px; height: 15px; border: 1px solid; border-color: #fff #666 #666 #fff; box-shadow: 1px 1px 0 #999; font-size: 8px; background: #f0f0f0; }
.devbody { flex: 1; display: flex; justify-content: space-between; align-items: flex-end; padding: 1px 11px 1px 5px; }
.devbody.tight { padding: 1px 4px 0 1px; }
.devtext { align-self: flex-start; display: flex; flex-direction: column; }
.devtext span { line-height: 21px; }
.mode { display: flex; align-items: center; gap: 66px; }
.cfg svg { width: 22px; height: 22px; }
.params { padding: 2px 0 0 9px; display: flex; flex-direction: column; }
.params label { line-height: 21px; white-space: nowrap; }

/* Measures table */
.measure .frame { border-color: #d8d840; border-top-color: #999; }
.measure .frame > h2 { font-size: 11px; height: 16px; padding-left: 9px; border: 0; }
.gridbox { margin: 0 22px 2px 2px; border: 2px solid; border-color: #777 #fff #fff #777; }
.gridrow { display: flex; }
.data { flex: 1; border-collapse: separate; border-spacing: 0; table-layout: fixed; font: 13px/20px "Noto Sans", sans-serif; color: #333; }
.data th { background: #f0f0f0; color: #111; font-size: 14px; font-weight: bold; padding: 0; border-right: 2px solid #777; border-bottom: 2px solid #777; }
.data thead th { height: 28px; border-right-width: 1px; }
.data th:first-child { width: 67px; border-top: 1px solid #fff; border-right-width: 2px; }
.data td { height: 31px; padding: 0 1px; text-align: right; background: #fff; border-right: 2px solid #c8c8c8; border-bottom: 2px solid #c4c4c4; }
.data thead .s25 { background: #f0c0c0; } .data thead .s50 { background: #f09090; } .data thead .s75 { background: #f06060; } .data thead .s100 { background: #f03030; }
.data .delta td { font-size: 14px; font-weight: bold; color: #111; }
.data .bad { background: #ffafaf; } .data .fair { background: #ffffaf; } .data .good { background: #afffaf; }
.data .light td { background: #f0f0f0; } .data .dark td { background: #e0e0e0; }
.data .cut th, .data .cut td { height: 7px; border-bottom: 0; }
.vthumb { width: 21px; padding: 22px 0 22px 9px; }
.vthumb::before { content: ""; display: block; width: 2px; height: 100%; background: #888; }
.hbar { height: 20px; display: flex; justify-content: space-between; align-items: center; padding: 0 24px 0 6px; }
.tri { border: 6px solid transparent; width: 0; height: 0; }
.tri.left { border-right: 8px solid #a0a0a0; border-left: 0; } .tri.right { border-left: 8px solid #a0a0a0; border-right: 0; }
.tri.up { border-bottom: 8px solid #a0a0a0; border-top: 0; } .tri.down { border-top: 8px solid #a0a0a0; border-bottom: 0; }

/* Side column */
.side { display: flex; flex-direction: column; }
.radios { padding-left: 7px; height: 97px; display: flex; flex-direction: column; }
.radios label { line-height: 20px; height: 20px; gap: 10px; }
.radios input { margin-bottom: 4px; }
.actions { margin: 3px 2px 0 1px; }
.actions button { width: 100%; height: 37px; background: #eaeaea; border: 1px solid; border-color: #fff #bbb #ccc #fff; padding-left: 5px; justify-content: flex-start; }
.actions button svg { width: 40px; height: 36px; }
.actions button span { flex: 1; text-align: center; }
.edit { margin: 4px 0 0 7px; width: 70px; height: 23px; background: #eee; }

/* Selected color */
.selbody { flex: 1; display: flex; justify-content: space-between; padding: 0 10px 8px 8px; }
.tag { background: #f0f0f0; height: 18px; line-height: 18px; }
.levels { width: 250px; }
.levels .tag { margin: 5px 0 0 2px; padding-left: 3px; width: 140px; }
.domes { width: 250px; height: 109px; background: #f0f0f0; margin-top: 11px; }
.compare { margin: 17px 0 20px 3px; width: 240px; height: 92px; background: #f0f0f0; display: flex; justify-content: space-between; padding: 0 20px 0 24px; font: bold 17px/20px "Liberation Sans", sans-serif; color: #000; }
.levels .target { width: 55px; margin: 0 0 0 2px; }
.wheel { margin: 0 0 0 45px; width: 145px; height: 112px; border: 1px solid #000; background: conic-gradient(#40ff00, #ffc000 52deg, #f00 90deg, #ff0080 128deg, #7d00c8 180deg, #00f 232deg, #0080a0 270deg, #00ff80 308deg, #40ff00); }
.current { width: 191px; display: flex; flex-direction: column; }
.current .tag { margin: 2px 0 0 12px; width: 160px; text-align: center; white-space: nowrap; }
.listbox { flex: 1; margin-top: 11px; border: 2px solid; border-color: #777 #fff #fff #777; display: flex; }
.listarea { flex: 1; background: #a0a0a0; }
.values { width: 100%; height: 691px; border-collapse: separate; border-spacing: 0; font: 14px/18px "Noto Sans", sans-serif; }
.values th { width: 70px; padding: 0; background: #f0f0f0; border-right: 2px solid #777; border-bottom: 1px solid #777; border-top: 1px solid #fff; font-weight: bold; }
.values td { padding: 0; background: #fff; border-bottom: 1px solid #c0c0c0; border-right: 1px solid #ccc; }
.values .g td { background: #e0e0e0; }
.values sup { font-size: 9px; line-height: 0; }
.vbar { width: 22px; display: flex; flex-direction: column; justify-content: space-between; align-items: center; padding: 6px 0; }

/* Charts */
.infobody { flex: 1; padding: 5px 1px 8px 6px; }
.charts { display: grid; grid-template-columns: 1fr 1fr; gap: 1px; margin: 9px 0 0 2px; }
.chart { border-style: solid; border-width: 5px 3px 3px 5px; border-color: #808080 #fff #fff #808080; }
.chart svg { width: 100%; height: auto; }
.axis { font: 25px "Liberation Serif", serif; fill: #bdbdbd; }
.grid { stroke: #0c4848; stroke-width: 2; stroke-opacity: .8; fill: none; }
.ctitle { font: bold 14px "Liberation Sans", sans-serif; fill: #c8c81e; text-anchor: middle; }
.brand { font: bold 20px "Liberation Sans", sans-serif; fill: #a0a0a0; text-anchor: end; }
.ln { fill: none; stroke: #ff0; stroke-width: 3; }
.ln.thick { stroke-width: 6; }
.ln.white { stroke: #fff; }
.ln.ref { stroke: #e4e4e4; stroke-width: 2; stroke-dasharray: 4 3; }

/* Tabs and status bar */
.tabstrip { height: 25px; border-top: 2px solid #333; display: flex; align-items: flex-start; }
.nav { display: flex; border: 1px solid #000; border-top: 0; margin-right: 8px; }
.nav button { width: 22px; height: 21px; background: #f0f0f0; border: 1px solid; border-color: #fff #888 #888 #fff; }
.tab { position: relative; height: 23px; padding: 0 13px; font: 12px/22px "Liberation Sans", sans-serif; border-bottom: 1px solid #444; color: #333; }
.tab.active { font-weight: bold; background: #fff; color: #000; padding: 0 11px; }
.tab::before, .tab::after { content: ""; position: absolute; top: 0; width: 2px; height: 22px; background: #222; transform: skewX(24deg); left: -1px; }
.tab::after { left: auto; right: -1px; transform: skewX(-24deg); }
.mini { width: 18px; height: 18px; margin: 1px 102px 0 auto; }
.tabref { font: 14px/20px "Liberation Sans", sans-serif; padding-right: 6px; }
.status { height: 23px; display: flex; gap: 4px; font: 14px/20px "Noto Sans", sans-serif; padding-left: 3px; }
.ready { margin-right: auto; padding-top: 2px; }
.cell { border: 1px solid #9db5d6; border-width: 2px 0 0 2px; box-shadow: 1px 0 0 #fff; height: 20px; margin-top: 2px; padding-left: 2px; width: 42px; }
.cell.a { width: 94px; } .cell.b { width: 35px; }
```
